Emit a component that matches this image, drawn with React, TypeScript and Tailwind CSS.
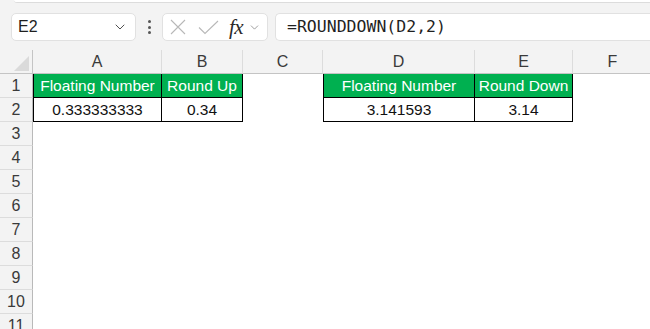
import { ChevronDown } from 'lucide-react';

const COLS = [
  { key: 'A', w: 'w-[129px]' },
  { key: 'B', w: 'w-[81px]' },
  { key: 'C', w: 'w-[80px]' },
  { key: 'D', w: 'w-[152px]' },
  { key: 'E', w: 'w-[98px]' },
  { key: 'F', w: 'w-[80px]' },
];

type Cell = { text: string; head?: boolean; left?: boolean };

// Only the filled cells; everything else is blank sheet
const DATA: Record<string, Cell> = {
  A1: { text: 'Floating Number', head: true, left: true },
  B1: { text: 'Round Up', head: true },
  A2: { text: '0.333333333', left: true },
  B2: { text: '0.34' },
  D1: { text: 'Floating Number', head: true, left: true },
  E1: { text: 'Round Down', head: true },
  D2: { text: '3.141593', left: true },
  E2: { text: '3.14' },
};

const ROWS = Array.from({ length: 11 }, (_, i) => i + 1);

function FormulaBar() {
  return (
    <div className="flex items-center h-[47px] pt-[1px] pl-[11px]">
      {/* Name box */}
      <div className="shrink-0 flex items-center justify-between w-[125px] h-[28px] bg-white border border-[#e1e1e1] rounded-[5px] pl-[6px] pr-[7px]">
        <span className="text-[16px] text-[#1f1f1f] font-['Liberation_Sans',sans-serif]">E2</span>
        <ChevronDown size={16} strokeWidth={1.4} className="text-[#444]" />
      </div>
      {/* More dots */}
      <div className="shrink-0 flex flex-col items-center gap-[2.5px] w-[26px]">
        <span className="w-[3px] h-[3px] rounded-full bg-[#555]" />
        <span className="w-[3px] h-[3px] rounded-full bg-[#555]" />
        <span className="w-[3px] h-[3px] rounded-full bg-[#555]" />
      </div>
      {/* Cancel / enter / fx */}
      <div className="shrink-0 flex items-center w-[106px] h-[28px] bg-white border border-[#e1e1e1] rounded-[5px] pl-[7px]">
        <svg width="16" height="16" viewBox="0 0 16 16" fill="none" stroke="#b8b8b8" strokeWidth="1.1">
          <path d="M1 1 L15 15 M15 1 L1 15" />
        </svg>
        <svg width="21" height="15" viewBox="0 0 21 15" fill="none" stroke="#b8b8b8" strokeWidth="1.1" className="ml-[12px]">
          <path d="M1 7.5 L7 13.5 L20 1" />
        </svg>
        <span className="ml-[10px] text-[21px] italic text-[#2a2a2a] leading-none font-['Liberation_Serif',serif] tracking-[-0.5px]">fx</span>
        <ChevronDown size={13} strokeWidth={1.3} className="text-[#777] ml-[5px]" />
      </div>
      {/* Formula input */}
      <div className="flex-1 flex items-center h-[28px] ml-[7px] bg-white border border-r-0 border-[#e1e1e1] rounded-l-[5px] pl-[11px]">
        <span className="text-[16.5px] text-[#1f1f1f] font-['DejaVu_Sans_Mono',monospace]">=ROUNDDOWN(D2,2)</span>
      </div>
    </div>
  );
}

function Grid() {
  return (
    <div className="flex flex-col font-['Liberation_Sans',sans-serif]">
      {/* column letters */}
      <div className="flex h-[24px] shrink-0">
        <div className="w-[33px] shrink-0 h-full flex items-end justify-end pr-[3px] pb-[2px] border-r border-b border-[#c4c4c4]">
          <svg width="15" height="15" viewBox="0 0 15 15">
            <polygon points="15,0 15,15 0,15" fill="#dadada" />
          </svg>
        </div>
        {COLS.map(c => (
          <div
            key={c.key}
            className={`${c.w} shrink-0 h-full flex items-center justify-center border-r border-b border-r-[#dcdcdc] border-b-[#c4c4c4] text-[16px] text-[#3a3a3a]`}
          >
            {c.key}
          </div>
        ))}
      </div>
      {ROWS.map(r => (
        <div key={r} className="flex h-[24px] shrink-0">
          <div className="w-[33px] shrink-0 h-full flex items-center justify-center bg-[#f3f3f3] border-r border-b border-r-[#b9b9b9] border-b-[#dcdcdc] text-[16px] text-[#3a3a3a]">
            {r}
          </div>
          {COLS.map(c => {
            const cell = DATA[`${c.key}${r}`];
            if (!cell) return <div key={c.key} className={`${c.w} shrink-0 h-full bg-white`} />;
            return (
              <div
                key={c.key}
                className={`${c.w} shrink-0 h-full flex items-center justify-center border-r border-b border-black text-[15.5px] ${
                  cell.left ? 'border-l' : ''
                } ${cell.head ? 'bg-[#00b050] text-white' : 'bg-white text-[#111]'}`}
              >
                {cell.text}
              </div>
            );
          })}
        </div>
      ))}
    </div>
  );
}

export default function App() {
  return (
    <div className="w-[650px] h-[329px] overflow-hidden bg-[#f3f3f3]">
      <div className="h-[3px] ml-[14px] bg-white rounded-bl-[4px] border-b border-[#dcdcdc]" />
      <FormulaBar />
      <Grid />
    </div>
  );
}
